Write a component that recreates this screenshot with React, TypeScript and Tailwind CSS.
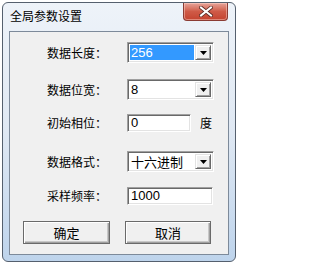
import React from "react";

const cjk = { fontFamily: '"Noto Sans CJK SC", "Liberation Sans", sans-serif' };
const latin = { fontFamily: '"Liberation Sans", "Noto Sans CJK SC", sans-serif' };

// sunken edit / combo frame
const sunken =
  "border border-t-[#a0a0a0] border-l-[#a0a0a0] border-b-white border-r-white shadow-[inset_1px_1px_0_#696969,inset_-1px_-1px_0_#e3e3e3] bg-white";

function Combo({ value, selected, text }: { value: string; selected?: boolean; text?: "cjk" | "latin" }) {
  return (
    <div className={`flex h-[21px] w-[87px] items-stretch p-[2px] ${sunken}`}>
      <div className="flex flex-1 items-center pr-[1px]">
        <div
          className={`flex h-full flex-1 items-center pl-[1px] ${selected ? "bg-[#3399ff] text-white" : "text-black"} ${
            text === "cjk" ? "text-[13px]" : "text-[13px]"
          }`}
          style={text === "cjk" ? cjk : latin}
        >
          {value}
        </div>
      </div>
      <div className="flex w-[16px] items-center justify-center border border-t-[#e3e3e3] border-l-[#e3e3e3] border-b-[#696969] border-r-[#696969] bg-[#f0f0f0] shadow-[inset_1px_1px_0_#ffffff,inset_-1px_-1px_0_#a0a0a0]">
        <svg width="7" height="4" viewBox="0 0 7 4">
          <path d="M0 0h7L3.5 4z" fill="#000" />
        </svg>
      </div>
    </div>
  );
}

function Edit({ value, width }: { value: string; width: string }) {
  return (
    <div className={`flex h-[18px] items-center pl-[3px] text-[13px] text-black ${width} ${sunken}`} style={latin}>
      {value}
    </div>
  );
}

function Label({ children }: { children: React.ReactNode }) {
  return (
    <div className="w-[80px] text-[12px] leading-none text-black" style={cjk}>
      {children}
    </div>
  );
}

function PushButton({ children, width }: { children: React.ReactNode; width: string }) {
  return (
    <div
      className={`flex h-[23px] items-center justify-center border border-[#6a6a6a] bg-[#f0f0f0] text-[13px] text-black shadow-[inset_1px_1px_0_#ffffff,inset_-1px_-1px_0_#a0a0a0,inset_-2px_-2px_0_#c8c8c8] ${width}`}
      style={cjk}
    >
      {children}
    </div>
  );
}

export default function App() {
  return (
    <div className="h-[263px] w-[238px] bg-white pl-[2px] pt-[2px]">
      <div className="flex h-[260px] w-[234px] flex-col rounded-[6px] border border-[#55606e] bg-gradient-to-b from-[#eef3f9] via-[#dfe8f3] to-[#bed4ec] px-[6px] pb-[6px]">
        {/* title bar */}
        <div className="flex h-[28px] items-start justify-between">
          <div className="pl-[1px] pt-[7px] text-[12px] leading-none text-black" style={cjk}>
            全局参数设置
          </div>
          <div className="mr-[1px] flex h-[18px] w-[45px] items-center justify-center rounded-b-[4px] border border-t-0 border-[#8a3b33] bg-gradient-to-b from-[#e6a49a] via-[#cf5a47] to-[#c44330] shadow-[inset_0_0_0_1px_rgba(255,220,210,0.45)]">
            <svg width="14" height="11" viewBox="0 0 14 11">
              <path d="M2 1.5l10 8M12 1.5l-10 8" stroke="#5a2a24" strokeWidth="3.6" strokeLinecap="square" />
              <path d="M2 1.5l10 8M12 1.5l-10 8" stroke="#ffffff" strokeWidth="2" strokeLinecap="square" />
            </svg>
          </div>
        </div>

        {/* client area */}
        <div className="flex h-[224px] w-[220px] flex-col border border-[#7d8a9a] bg-[#f0f0f0] pt-[10px]">
          <div className="flex items-center pl-[37px]">
            <Label>数据长度：</Label>
            <Combo value="256" selected />
          </div>
          <div className="mt-[16px] flex items-center pl-[37px]">
            <Label>数据位宽：</Label>
            <Combo value="8" />
          </div>
          <div className="mt-[14px] flex items-center pl-[37px]">
            <Label>初始相位：</Label>
            <Edit value="0" width="w-[64px]" />
            <div className="ml-[9px] text-[12px] leading-none text-black" style={cjk}>
              度
            </div>
          </div>
          <div className="mt-[19px] flex items-center pl-[37px]">
            <Label>数据格式：</Label>
            <Combo value="十六进制" text="cjk" />
          </div>
          <div className="mt-[15px] flex items-center pl-[37px]">
            <Label>采样频率：</Label>
            <Edit value="1000" width="w-[86px]" />
          </div>
          <div className="mt-[16px] flex items-center gap-[15px] pl-[13px]">
            <PushButton width="w-[87px]">确定</PushButton>
            <PushButton width="w-[86px]">取消</PushButton>
          </div>
        </div>
      </div>
    </div>
  );
}
